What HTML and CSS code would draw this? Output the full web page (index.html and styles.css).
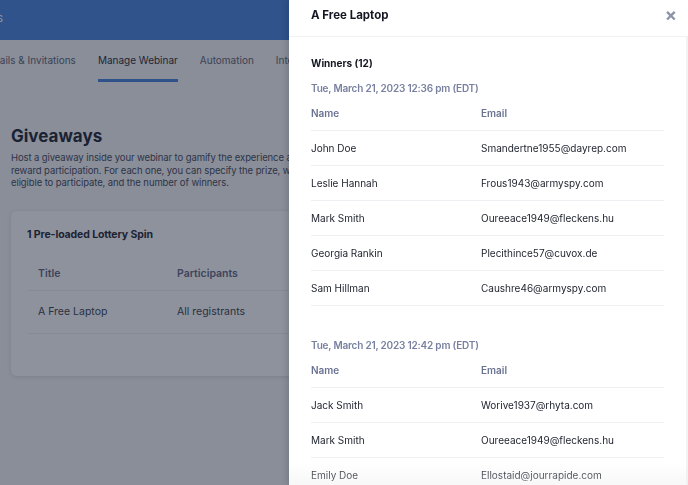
FILE: index.html
```html
<!DOCTYPE html>
<html lang="en">
<head>
  <meta charset="UTF-8" />
  <meta name="viewport" content="width=device-width, initial-scale=1.0"/>
  <title>Giveaways - Winners</title>
  <link rel="stylesheet" href="styles.css">
</head>
<body>

  <!-- Page behind the drawer -->
  <div class="page">
    <div class="topbar"><span class="topbar-title">Webinars</span></div>

    <div class="tabs">
      <span class="tab first">Emails &amp; Invitations</span>
      <span class="tab active">Manage Webinar</span>
      <span class="tab">Automation</span>
      <span class="tab">Integrations</span>
    </div>

    <div class="content">
      <h1>Giveaways</h1>
      <p class="intro">Host a giveaway inside your webinar to gamify the experience and reward participation. For each one, you can specify the prize, who's eligible to participate, and the number of winners.</p>

      <div class="card">
        <h2>1 Pre-loaded Lottery Spin</h2>
        <table class="list">
          <tr><th class="col-title">Title</th><th class="col-part">Participants</th><th>Winners</th></tr>
          <tr><td class="col-title">A Free Laptop</td><td class="col-part">All registrants</td><td>12</td></tr>
        </table>
      </div>
    </div>
  </div>

  <div class="backdrop"></div>

  <!-- Drawer -->
  <div class="drawer">
    <div class="drawer-head">
      <span class="drawer-title">A Free Laptop</span>
      <span class="close">&times;</span>
    </div>

    <div class="drawer-body">
      <div class="winners">Winners (12)</div>

      <div class="group">
        <div class="date">Tue, March 21, 2023 12:36 pm (EDT)</div>
        <table class="winner-table">
          <tr><th>Name</th><th>Email</th></tr>
          <tr><td>John Doe</td><td>Smandertne1955@dayrep.com</td></tr>
          <tr><td>Leslie Hannah</td><td>Frous1943@armyspy.com</td></tr>
          <tr><td>Mark Smith</td><td>Oureeace1949@fleckens.hu</td></tr>
          <tr><td>Georgia Rankin</td><td>Plecithince57@cuvox.de</td></tr>
          <tr><td>Sam Hillman</td><td>Caushre46@armyspy.com</td></tr>
        </table>
      </div>

      <div class="group">
        <div class="date">Tue, March 21, 2023 12:42 pm (EDT)</div>
        <table class="winner-table">
          <tr><th>Name</th><th>Email</th></tr>
          <tr><td>Jack Smith</td><td>Worive1937@rhyta.com</td></tr>
          <tr><td>Mark Smith</td><td>Oureeace1949@fleckens.hu</td></tr>
          <tr><td>Emily Doe</td><td>Ellostaid@jourrapide.com</td></tr>
        </table>
      </div>
    </div>
    <div class="fade"></div>
  </div>

</body>
</html>
```

FILE: styles.css
```css
body {
  font-family: Inter, "Noto Sans", Arial, sans-serif;
  margin: 0;
  background: #f5f6f8;
  overflow: hidden;
  height: 485px;
}

/* Page behind */
.page {
  width: 900px;
}

.topbar {
  height: 40px;
  background: #4280dc;
  display: flex;
  align-items: center;
}

.topbar-title {
  color: #fff;
  font-size: 12px;
  margin-left: -50px;
  margin-top: -6px;
}

.tabs {
  height: 42px;
  display: flex;
  align-items: stretch;
  gap: 22px;
  font-size: 10px;
  color: #5a6070;
}

.tab {
  display: flex;
  align-items: center;
  box-sizing: border-box;
  padding-top: 1px;
  border-bottom: 3px solid transparent;
}

.tab.first {
  margin-left: -15px;
}

.tab.active {
  color: #1f2433;
  border-bottom-color: #3f7fd9;
}

.content {
  padding: 0 11px;
}

h1 {
  font-size: 17px;
  font-weight: 700;
  color: #161c2c;
  margin: 43px 0 0;
  line-height: 22px;
}

.intro {
  font-size: 9.5px;
  letter-spacing: -0.1px;
  line-height: 12.5px;
  color: #3e4455;
  width: 300px;
  margin: 5px 0 0;
}

.card {
  margin-top: 21px;
  width: 640px;
  background: #fff;
  border-radius: 6px;
  box-shadow: 0 1px 4px rgba(0,0,0,0.12);
  padding: 17px 16px 42px;
  box-sizing: border-box;
}

.card h2 {
  font-size: 10.5px;
  font-weight: 700;
  color: #1a2030;
  margin: 0;
  line-height: 14px;
  letter-spacing: -0.1px;
}

.list {
  border-collapse: collapse;
  table-layout: fixed;
  width: 100%;
  margin-top: 16px;
  font-size: 10.5px;
}

.list th {
  text-align: left;
  font-weight: 600;
  color: #5b6480;
  height: 32px;
  border-bottom: 1px solid #eceef2;
}

.list td {
  color: #333a4a;
  height: 42px;
  border-bottom: 1px solid #eceef2;
}

.list th, .list td {
  padding: 0;
}

.list .col-title {
  padding-left: 11px;
  width: 139px;
}

.list .col-part {
  width: 150px;
}

.backdrop {
  position: fixed;
  inset: 0;
  background: rgba(29, 37, 57, 0.5);
}

/* Drawer */
.drawer {
  position: fixed;
  top: 0;
  right: 0;
  bottom: 0;
  width: 399px;
  background: #fff;
  box-shadow: -2px 0 6px rgba(0,0,0,0.15);
  overflow: hidden;
}

.drawer-head {
  height: 36px;
  display: flex;
  align-items: center;
  justify-content: space-between;
  padding: 0 11px 0 22px;
  border-bottom: 1px solid #f0f1f3;
}

.drawer-title {
  font-size: 11.5px;
  font-weight: 700;
  color: #131722;
  margin-top: -6px;
}

.close {
  font-size: 18px;
  font-weight: 700;
  color: #8d93a8;
  margin-top: -6px;
  line-height: 1;
}

.drawer-body {
  padding: 19px 22px 0 22px;
  border-right: 2px solid #f1f2f4;
  height: 500px;
}

.winners {
  font-size: 10px;
  font-weight: 700;
  color: #131722;
  line-height: 14px;
}

.group + .group {
  margin-top: 32px;
}

.winners + .group .date {
  margin-top: 11px;
}

.date {
  font-size: 10px;
  font-weight: 600;
  color: #7880a0;
  line-height: 14px;
  letter-spacing: -0.2px;
}

.winner-table {
  width: 353px;
  border-collapse: collapse;
  font-size: 10px;
}

.winner-table th {
  text-align: left;
  font-weight: 600;
  color: #6a7392;
  height: 35px;
  padding: 0;
  border-bottom: 1px solid #eeeff2;
}

.winner-table td {
  color: #1c202b;
  height: 34px;
  padding: 0;
  border-bottom: 1px solid #eeeff2;
}

.winner-table th:first-child,
.winner-table td:first-child {
  width: 170px;
}

.fade {
  position: absolute;
  left: 0;
  right: 0;
  bottom: 0;
  height: 22px;
  background: linear-gradient(rgba(255,255,255,0), rgba(238,238,240,0.45));
}
```
